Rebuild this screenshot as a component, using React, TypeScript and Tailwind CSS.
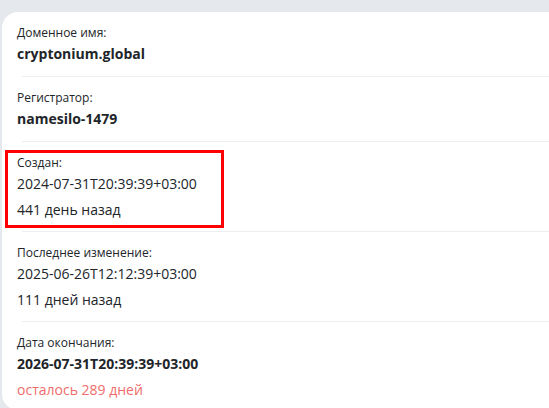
const font = { fontFamily: "'Open Sans', 'Noto Sans', sans-serif" };

type Row = {
  label: string;
  value: string;
  bold?: boolean;
  note?: string;
  noteRed?: boolean;
  highlight?: boolean;
};

const rows: Row[] = [
  { label: "Доменное имя:", value: "cryptonium.global", bold: true },
  { label: "Регистратор:", value: "namesilo-1479", bold: true },
  {
    label: "Создан:",
    value: "2024-07-31T20:39:39+03:00",
    note: "441 день назад",
    highlight: true,
  },
  {
    label: "Последнее изменение:",
    value: "2025-06-26T12:12:39+03:00",
    note: "111 дней назад",
  },
  {
    label: "Дата окончания:",
    value: "2026-07-31T20:39:39+03:00",
    bold: true,
    note: "осталось 289 дней",
    noteRed: true,
  },
];

const App = () => {
  return (
    <div
      className="h-[408px] w-[549px] overflow-hidden bg-[#e5e9ee] pt-[12px] pl-[2px]"
      style={font}
    >
      <div className="w-[600px] rounded-2xl bg-white text-[#212529]">
        {rows.map((row, i) => (
          <div key={row.label}>
            {i > 0 && <div className="ml-5 h-px bg-[#eceef0]" />}
            <div
              className={
                i === rows.length - 1
                  ? "relative px-[15px] pt-[13px] pb-[10px]"
                  : row.note
                    ? "relative px-[15px] pt-[13px] pb-[11px]"
                    : "relative px-[15px] pt-[13px] pb-[12px]"
              }
            >
              {row.highlight && (
                <div className="pointer-events-none absolute top-[8px] left-[3px] h-[78px] w-[219px] border-[3px] border-[#ff0000]" />
              )}
              <div className="text-[12px] leading-4">{row.label}</div>
              <div
                className={
                  row.bold
                    ? "mt-[3px] text-[14px] leading-5 font-bold"
                    : "mt-[3px] text-[14px] leading-5"
                }
              >
                {row.value}
              </div>
              {row.note && (
                <div
                  className={
                    row.noteRed
                      ? "mt-[6px] text-[14px] leading-5 text-[#f06c6c]"
                      : "mt-[6px] text-[14px] leading-5"
                  }
                >
                  {row.note}
                </div>
              )}
            </div>
          </div>
        ))}
      </div>
    </div>
  );
};

export default App;
